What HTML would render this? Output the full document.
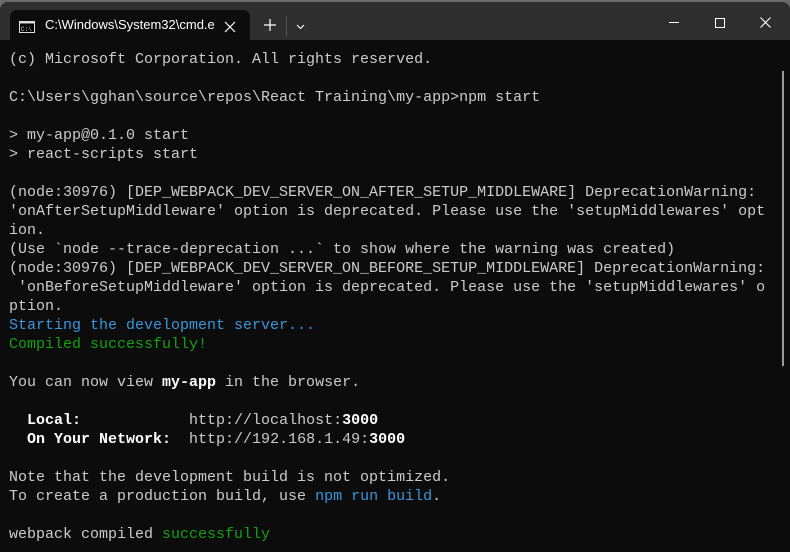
<!DOCTYPE html>
<html><head><meta charset="utf-8"><style>
html,body{margin:0;padding:0;width:790px;height:552px;overflow:hidden;background:#6b6b6b;}
.win{position:absolute;left:0;top:2px;width:790px;height:550px;background:#0c0c0c;border-radius:8px 8px 0 0;overflow:hidden;}
.title{position:absolute;left:0;top:0;width:790px;height:38px;background:#2e2e2e;}
.tab{position:absolute;left:10px;top:8px;width:240px;height:32px;background:#0c0c0c;border-radius:7px 7px 0 0;}
.tab .t{position:absolute;left:35px;top:7px;color:#fff;font:13px "Liberation Sans",sans-serif;width:175px;overflow:hidden;white-space:nowrap;}
pre{position:absolute;left:9px;top:48px;margin:0;font:15px/19px "Liberation Mono",monospace;color:#cccccc;}
b{color:#fff;font-weight:bold;}
.bl{color:#3a96dd}.gr{color:#13a10e}
.sb{position:absolute;left:782px;top:69px;width:2px;height:295px;background:#9a9a9a;}
</style></head><body>
<div class="win">
<div class="title">
<div class="tab">
<svg style="position:absolute;left:9px;top:11px" width="16" height="12"><rect x="0.5" y="0.5" width="15" height="11" fill="#000" stroke="#ddd"/><rect x="0.5" y="0.5" width="15" height="2" fill="#ddd"/><text x="2" y="10" font-size="6" fill="#ddd" font-family="Liberation Mono">C:\</text></svg>
<div class="t">C:\Windows\System32\cmd.e</div>
<svg style="position:absolute;left:214px;top:11px" width="12" height="12"><path d="M1 1L11 11M11 1L1 11" stroke="#fff" stroke-width="1.2"/></svg>
</div>
<svg style="position:absolute;left:264px;top:17px" width="12" height="12"><path d="M6 0V12M0 6H12" stroke="#fff" stroke-width="1.2"/></svg>
<div style="position:absolute;left:286px;top:14px;width:1px;height:20px;background:#555"></div>
<svg style="position:absolute;left:296px;top:22px" width="9" height="6"><path d="M1 1L4.5 4.5L8 1" stroke="#fff" fill="none" stroke-width="1.1"/></svg>
<div style="position:absolute;left:669px;top:20px;width:10px;height:1px;background:#fff"></div>
<div style="position:absolute;left:715px;top:16px;width:8px;height:8px;border:1px solid #fff"></div>
<svg style="position:absolute;left:760px;top:15px" width="11" height="11"><path d="M0.5 0.5L10.5 10.5M10.5 0.5L0.5 10.5" stroke="#fff" stroke-width="1.1"/></svg>
</div>
<pre>(c) Microsoft Corporation. All rights reserved.

C:\Users\gghan\source\repos\React Training\my-app&gt;npm start

&gt; my-app@0.1.0 start
&gt; react-scripts start

(node:30976) [DEP_WEBPACK_DEV_SERVER_ON_AFTER_SETUP_MIDDLEWARE] DeprecationWarning:
'onAfterSetupMiddleware' option is deprecated. Please use the 'setupMiddlewares' opt
ion.
(Use `node --trace-deprecation ...` to show where the warning was created)
(node:30976) [DEP_WEBPACK_DEV_SERVER_ON_BEFORE_SETUP_MIDDLEWARE] DeprecationWarning:
 'onBeforeSetupMiddleware' option is deprecated. Please use the 'setupMiddlewares' o
ption.
<span class="bl">Starting the development server...</span>
<span class="gr">Compiled successfully!</span>

You can now view <b>my-app</b> in the browser.

  <b>Local:</b>            http://localhost:<b>3000</b>
  <b>On Your Network:</b>  http://192.168.1.49:<b>3000</b>

Note that the development build is not optimized.
To create a production build, use <span class="bl">npm run build</span>.

webpack compiled <span class="gr">successfully</span></pre>
<div class="sb"></div>
</div>
</body></html>
